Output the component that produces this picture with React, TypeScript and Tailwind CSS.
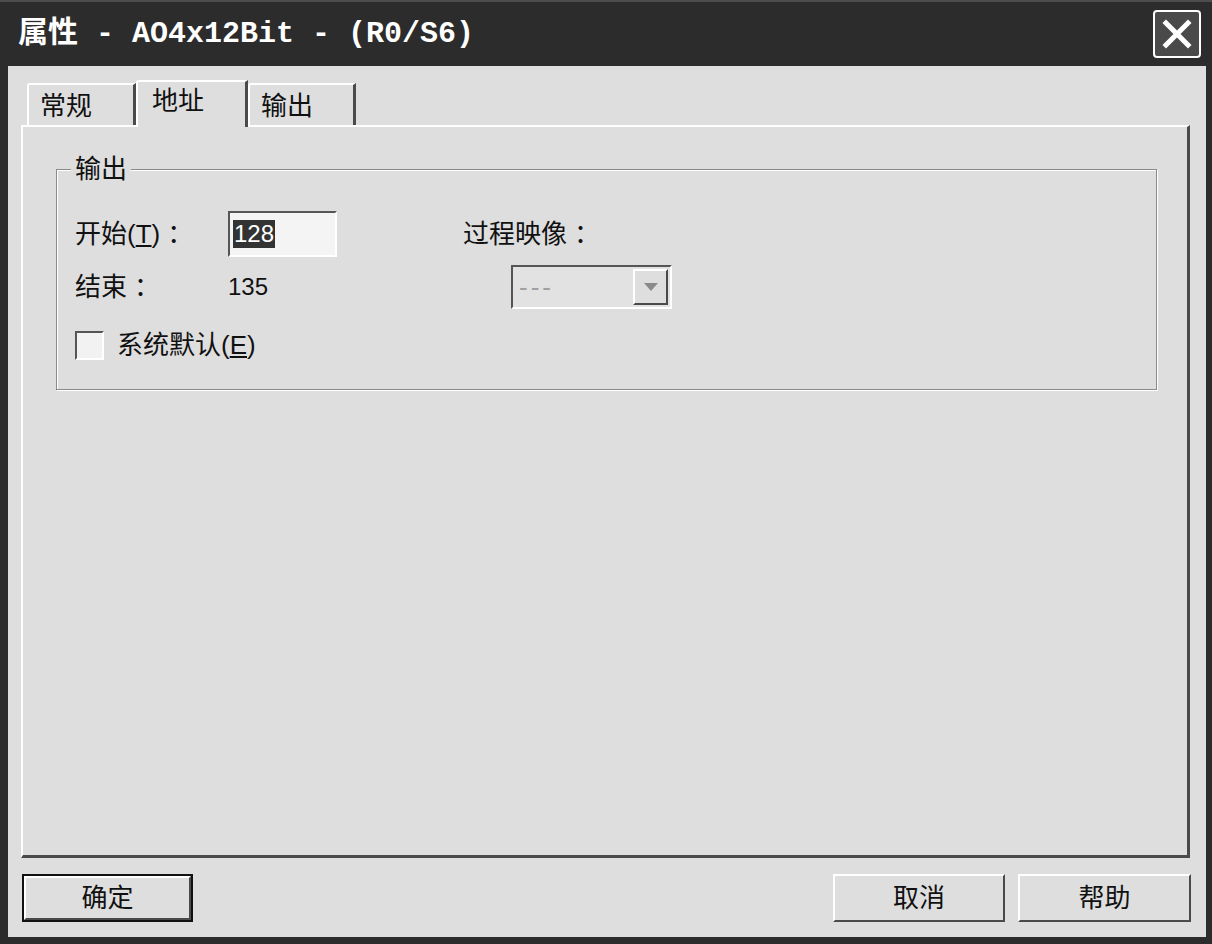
import React from 'react';

const ui = "font-['Liberation_Sans','Noto_Sans_CJK_SC',sans-serif]";

const Raised: React.FC<{ className?: string; children?: React.ReactNode }> = ({ className = '', children }) => (
  <div
    className={`border-t-2 border-l-2 border-t-white border-l-white border-r-2 border-b-2 border-r-[#4a4a4a] border-b-[#4a4a4a] bg-[#dedede] ${className}`}
  >
    {children}
  </div>
);

const DialogButton: React.FC<{ label: string; isDefault?: boolean; className?: string }> = ({
  label,
  isDefault,
  className = '',
}) => (
  <div className={`h-[48px] ${isDefault ? 'border-2 border-[#111]' : ''} ${className}`}>
    <Raised className="h-full flex items-center justify-center text-[26px] text-[#111]">{label}</Raised>
  </div>
);

const Tab: React.FC<{ label: string; active?: boolean; className?: string }> = ({ label, active, className = '' }) => (
  <div
    className={`relative flex items-start border-t-2 border-l-2 border-t-white border-l-white border-r-[3px] border-r-[#4a4a4a] bg-[#dedede] rounded-tl-[3px] ${
      active ? 'z-10 h-[47px] -mb-[2px] pt-[4px] pl-[14px]' : 'h-[42px] pt-[6px] pl-[11px]'
    } ${className}`}
  >
    <span className="text-[26px] leading-[30px] text-[#111]">{label}</span>
  </div>
);

// full-width colon, centred in its cell like the old bitmap font
const Colon = () => <span className="pl-[7px]">：</span>;

export default function App() {
  return (
    <div className={`w-[1212px] h-[944px] bg-[#2c2c2c] flex flex-col ${ui}`}>
      {/* title bar */}
      <div className="h-[66px] flex items-center justify-between pl-[18px] pr-[11px] border-t-2 border-[#4d4d4d]">
        <span className="font-['Liberation_Mono','Noto_Sans_CJK_SC',monospace] font-bold text-[30px] text-white whitespace-pre">
          属性 - AO4x12Bit - (R0/S6)
        </span>
        <div className="w-[48px] h-[48px] border-2 border-white rounded-[4px] bg-[#4a4a4a] flex items-center justify-center">
          <svg width="34" height="34" viewBox="0 0 34 34">
            <path d="M6 6 L28 28 M28 6 L6 28" stroke="white" strokeWidth="5" strokeLinecap="square" />
          </svg>
        </div>
      </div>

      {/* body */}
      <div className="flex-1 ml-[8px] mr-[6px] mb-[7px] bg-[#dedede] flex flex-col">
        <div className="flex items-end pt-[14px] pl-[19px] h-[59px]">
          <Tab label="常规" className="w-[109px]" />
          <Tab label="地址" active className="w-[112px]" />
          <Tab label="输出" className="w-[108px]" />
        </div>

        <div className="ml-[13px] w-[1169px] h-[733px] border-t-2 border-l-2 border-t-white border-l-white border-r-[3px] border-b-[3px] border-r-[#4a4a4a] border-b-[#4a4a4a]">
          {/* group box */}
          <div className="relative ml-[33px] mt-[42px] w-[1101px] h-[221px] border border-[#8a8a8a] shadow-[1px_1px_0_#fff,inset_1px_1px_0_#fff] flex text-[#111]">
            <span className="absolute -top-[17px] left-[14px] px-[4px] bg-[#dedede] text-[26px] leading-[32px]">输出</span>

            <div className="w-[406px] pl-[18px] pt-[41px]">
              <div className="flex items-center h-[46px]">
                <span className="w-[153px] text-[26px]">
                  开始(<span className="underline">T</span>)<Colon />
                </span>
                <div className="w-[109px] h-[46px] bg-[#f4f4f4] border-t-2 border-l-2 border-t-[#555] border-l-[#555] border-b-2 border-r-2 border-b-white border-r-white flex items-center pl-[3px]">
                  <span className="bg-[#333] text-white text-[24px] leading-[28px] px-[1px]">128</span>
                </div>
              </div>
              <div className="flex items-center h-[30px] mt-[15px]">
                <span className="w-[153px] text-[26px]">
                  结束<Colon />
                </span>
                <span className="text-[24px]">135</span>
              </div>
              <div className="flex items-center h-[29px] mt-[29px]">
                <div className="w-[29px] h-[29px] bg-[#f2f2f2] border-t-2 border-l-2 border-t-[#555] border-l-[#555] border-b-2 border-r-2 border-b-white border-r-white" />
                <span className="ml-[13px] text-[26px]">
                  系统默认(<span className="underline">E</span>)
                </span>
              </div>
            </div>

            <div className="pt-[41px]">
              <div className="flex items-center h-[46px]">
                <span className="text-[26px]">
                  过程映像<Colon />
                </span>
              </div>
              <div className="ml-[48px] mt-[8px] w-[161px] h-[44px] bg-[#e2e2e2] border-t-2 border-l-2 border-t-[#555] border-l-[#555] border-b-2 border-r-2 border-b-white border-r-white flex items-center justify-between pl-[6px] pr-[2px]">
                <span className="text-[26px] leading-[30px] text-[#a0a0a0] tracking-[3px]">---</span>
                <Raised className="w-[35px] h-[36px] flex items-center justify-center">
                  <svg width="14" height="8" viewBox="0 0 14 8">
                    <path d="M0 0 H14 L7 8 Z" fill="#8a8a8a" />
                  </svg>
                </Raised>
              </div>
            </div>
          </div>
        </div>

        <div className="flex mt-[16px] pl-[14px] pr-[15px]">
          <DialogButton label="确定" isDefault className="w-[171px]" />
          <div className="flex-1" />
          <DialogButton label="取消" className="w-[172px]" />
          <DialogButton label="帮助" className="w-[173px] ml-[13px]" />
        </div>
      </div>
    </div>
  );
}
